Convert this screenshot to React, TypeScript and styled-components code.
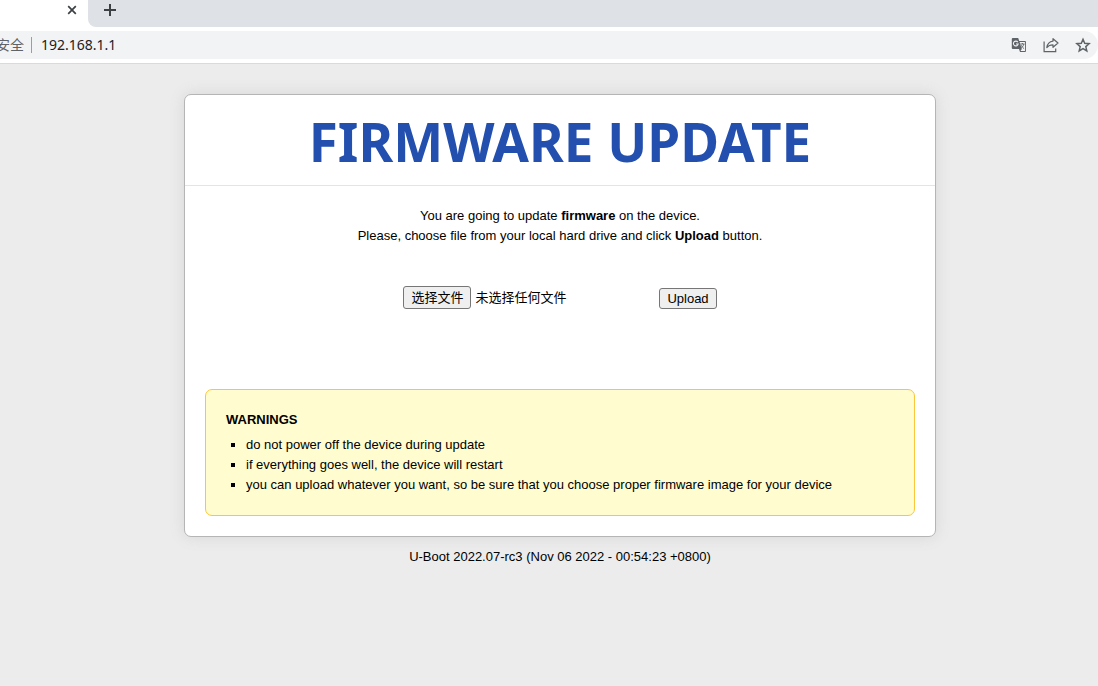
import React, { useRef, useState } from 'react';
import styled, { createGlobalStyle } from 'styled-components';

const GlobalStyle = createGlobalStyle`
  * { box-sizing: border-box; }
  body {
    margin: 0;
    background: #ececec;
    color: #000;
    font: 13px/20px Arial, "Liberation Sans", "Noto Sans CJK SC", sans-serif;
  }
`;

const TabStrip = styled.div`
  display: flex;
  height: 27px;
  background: #fff;
`;

const ActiveTab = styled.div`
  display: flex;
  align-items: flex-start;
  justify-content: flex-end;
  width: 88px;
  padding: 2px 8px 0 0;
  background: #fff;
`;

const StripRest = styled.div`
  flex: 1;
  padding: 2px 0 0 14px;
  background: #dee1e6;
  border-bottom-left-radius: 8px;
`;

const IconButton = styled.button`
  display: flex;
  align-items: center;
  justify-content: center;
  width: 16px;
  height: 16px;
  padding: 0;
  border: 0;
  background: none;
  color: #5f6368;
`;

const Toolbar = styled.div`
  padding: 4px 0;
  background: #fff;
  border-bottom: 1px solid #d9dadb;
`;

const Omnibox = styled.div`
  display: flex;
  align-items: center;
  height: 28px;
  padding-right: 7px;
  background: #f1f3f4;
  border-radius: 0 14px 14px 0;
  font: 14px/20px "Noto Sans", "Noto Sans CJK SC", sans-serif;
`;

const SecurityLabel = styled.span`
  display: flex;
  justify-content: flex-end;
  width: 24px;
  white-space: nowrap;
  color: #5f6368;
  font-family: "Noto Sans CJK SC", sans-serif;
  line-height: 18px;
  padding-bottom: 2px;
`;

const Divider = styled.span`
  width: 1px;
  height: 16px;
  margin: 0 9px 0 7px;
  background: #9a9da1;
`;

const Address = styled.input`
  flex: 1;
  min-width: 0;
  padding: 0;
  border: 0;
  outline: 0;
  background: none;
  color: #202124;
  font: inherit;
`;

const Actions = styled.div`
  display: flex;
  gap: 16px;
`;

const Page = styled.main`
  padding: 30px 0 30px 22px;
`;

const Card = styled.section`
  width: 100%;
  max-width: 752px;
  margin: 0 auto;
  background: #fff;
  border: 1px solid #b5b5b5;
  border-radius: 7px;
  box-shadow: 0 0 15px #d6d6d6;
`;

const Title = styled.h1`
  margin: 0;
  padding: 22px 0 18px;
  border-bottom: 1px solid #e4e4e4;
  color: #2350ae;
  font: bold 53px/50px Tahoma, "Noto Sans", sans-serif;
  text-align: center;
`;

const CardBody = styled.div`
  padding: 20px;
`;

const Intro = styled.p`
  margin: 0 0 40px;
  text-align: center;
`;

const UploadForm = styled.form`
  display: flex;
  align-items: flex-end;
  justify-content: center;
  gap: 4px;
  margin-bottom: 80px;
`;

const FilePicker = styled.div`
  display: flex;
  align-items: center;
  gap: 4px;
  width: 252px;
`;

const HiddenFileInput = styled.input`
  display: none;
`;

const FormButton = styled.button<{ $tall?: boolean }>`
  height: ${(p) => (p.$tall ? 23 : 21)}px;
  padding: 0 7px;
  border: 1px solid #767676;
  border-radius: 3px;
  background: #efefef;
  color: #000;
  font: inherit;
  line-height: 18px;
`;

const Warnings = styled.section`
  padding: 20px;
  background: #fffdd0;
  border: 1px solid #fbc63c;
  border-radius: 7px;
`;

const WarningsTitle = styled.h2`
  margin: 0 0 5px;
  font-size: 13px;
  line-height: 20px;
`;

const WarningList = styled.ul`
  margin: 0;
  padding-left: 20px;
  list-style: square;
`;

const Footer = styled.footer`
  margin-top: 10px;
  text-align: center;
`;

const warnings = [
  'do not power off the device during update',
  'if everything goes well, the device will restart',
  'you can upload whatever you want, so be sure that you choose proper firmware image for your device',
];

const CloseIcon = () => (
  <svg width="16" height="16" viewBox="0 0 16 16" stroke="#3c4043" strokeWidth="1.7">
    <path d="M4.2 4.2l7.6 7.6M11.8 4.2l-7.6 7.6" />
  </svg>
);

const PlusIcon = () => (
  <svg width="16" height="16" viewBox="0 0 16 16" stroke="#3c4043" strokeWidth="2">
    <path d="M8 2v12M2 8h12" />
  </svg>
);

const TranslateIcon = () => (
  <svg width="16" height="16" viewBox="0 0 16 16" fill="none">
    <path d="M1.8 1h5.4l1 3H14a1 1 0 0 1 1 1v9a1 1 0 0 1-1 1H9l-1-3H1.800a1 1 0 0 1-1-1V2a1 1 0 0 1 1-1z" fill="#5f6368" />
    <path d="M8.600 4.900H13.500a.6.6 0 0 1 .6.6v8a.6.6 0 0 1-.6.6H9.500l1.300-2.100z" fill="#f1f3f4" />
    <path d="M6.800 5.100A2.400 2.400 0 1 0 7.200 7H5" stroke="#f1f3f4" strokeWidth="1.100" />
    <path d="M9.300 7h4.300M11.400 6v1M12.800 7c-.3 1.700-1.300 3-2.600 4M10.200 8.200c.5 1.300 1.500 2.500 2.900 3.500" stroke="#5f6368" strokeWidth=".9" />
  </svg>
);

const ShareIcon = () => (
  <svg width="16" height="16" viewBox="0 0 16 16" fill="none" stroke="#5f6368" strokeWidth="1.200">
    <path d="M1.100 4.500v10.200h11.600v-3.200" />
    <path d="M10 1.700l5 4.300-5 4.300V7.900c-2.700 0-4.700.8-6.200 2.700C4.300 7.300 6.300 4.600 10 4.100z" strokeLinejoin="round" />
  </svg>
);

const StarIcon = () => (
  <svg width="16" height="16" viewBox="0 0 16 16" fill="none" stroke="#5f6368" strokeWidth="1.500">
    <path d="M8 2.300l1.700 4 4.400.4-3.300 2.900 1 4.300L8 11.600l-3.800 2.300 1-4.300-3.300-2.900 4.400-.4z" />
  </svg>
);

export default function App() {
  const fileRef = useRef<HTMLInputElement>(null);
  const [fileName, setFileName] = useState('');

  return (
    <>
      <GlobalStyle />
      <header>
        <TabStrip>
          <ActiveTab>
            <IconButton aria-label="关闭"><CloseIcon /></IconButton>
          </ActiveTab>
          <StripRest>
            <IconButton aria-label="打开新的标签页"><PlusIcon /></IconButton>
          </StripRest>
        </TabStrip>
        <Toolbar>
          <Omnibox>
            <SecurityLabel>安全</SecurityLabel>
            <Divider />
            <Address aria-label="地址" defaultValue="192.168.1.1" />
            <Actions>
              <IconButton aria-label="翻译此页"><TranslateIcon /></IconButton>
              <IconButton aria-label="分享此页"><ShareIcon /></IconButton>
              <IconButton aria-label="添加书签"><StarIcon /></IconButton>
            </Actions>
          </Omnibox>
        </Toolbar>
      </header>
      <Page>
        <Card>
          <Title>FIRMWARE UPDATE</Title>
          <CardBody>
            <Intro>
              You are going to update <strong>firmware</strong> on the device.
              <br />
              Please, choose file from your local hard drive and click <strong>Upload</strong> button.
            </Intro>
            <UploadForm onSubmit={(e) => e.preventDefault()}>
              <FilePicker>
                <HiddenFileInput
                  ref={fileRef}
                  id="firmware"
                  type="file"
                  aria-label="选择文件"
                  onChange={(e) => setFileName(e.target.files?.[0]?.name ?? '')}
                />
                <FormButton $tall type="button" onClick={() => fileRef.current?.click()}>
                  选择文件
                </FormButton>
                <output htmlFor="firmware">{fileName || '未选择任何文件'}</output>
              </FilePicker>
              <FormButton type="submit">Upload</FormButton>
            </UploadForm>
            <Warnings>
              <WarningsTitle>WARNINGS</WarningsTitle>
              <WarningList>
                {warnings.map((text) => (
                  <li key={text}>{text}</li>
                ))}
              </WarningList>
            </Warnings>
          </CardBody>
        </Card>
        <Footer>U-Boot 2022.07-rc3 (Nov 06 2022 - 00:54:23 +0800)</Footer>
      </Page>
    </>
  );
}
